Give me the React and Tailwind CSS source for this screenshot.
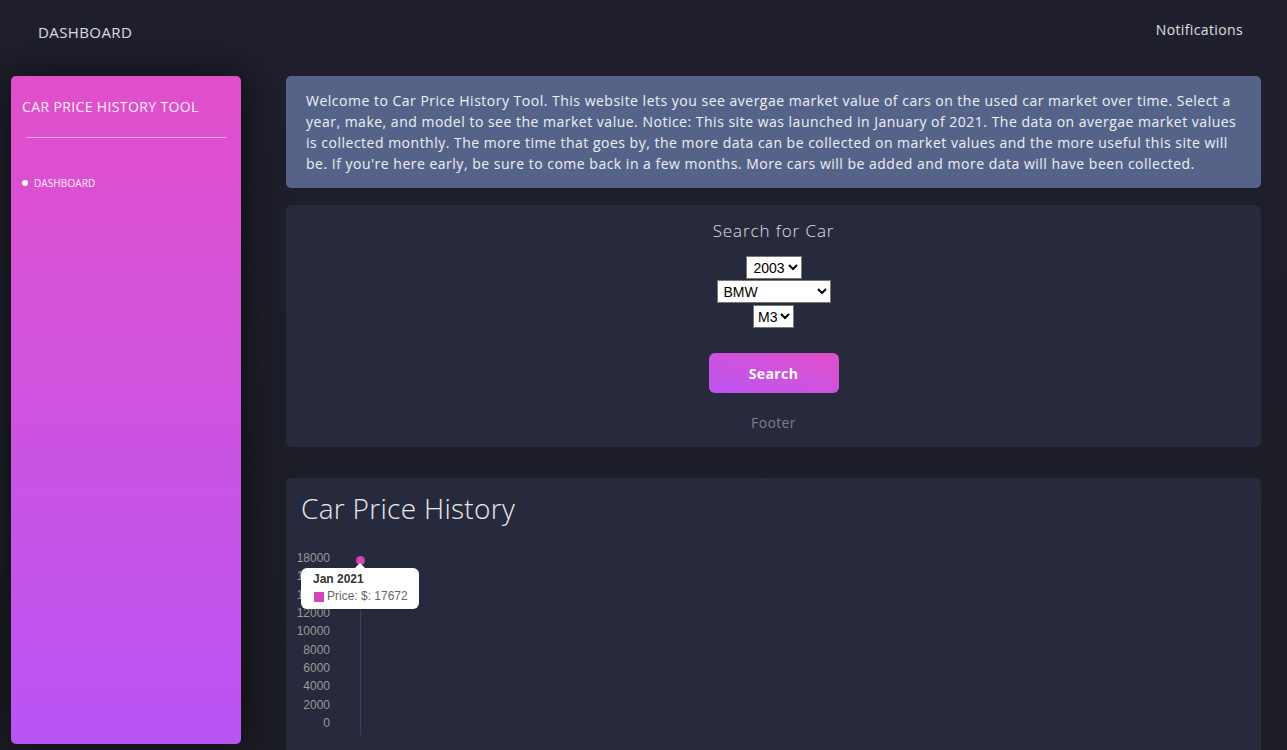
import React from "react";

export default function App() {
  const yLabels = ["18000", "16000", "14000", "12000", "10000", "8000", "6000", "4000", "2000", "0"];
  return (
    <div className="min-h-screen bg-gradient-to-b from-[#1f1f2e] to-[#1c1d24] font-['Open_Sans',sans-serif] text-white tracking-[0.37px]">
      <header className="h-[76px] flex justify-between items-start">
        <div className="pl-[38px] pt-[21px] text-[15px] leading-[22px] text-white/85 tracking-[0.4px]">DASHBOARD</div>
        <div className="pr-[44px] pt-[20px] text-[14px] leading-[20px] text-white/85">Notifications</div>
      </header>
      <div className="flex">
        <aside className="ml-[11px] w-[230px] h-[668px] shrink-0 rounded-[5px] bg-gradient-to-t from-[#ba54f5] to-[#e14eca] shadow-[0_0_45px_rgba(0,0,0,0.6)]">
          <div className="pl-[11px] pt-[21px] text-[14px] leading-[20px] text-white/90">CAR PRICE HISTORY TOOL</div>
          <div className="mx-[15px] mt-[20px] h-px bg-white/50"></div>
          <div className="mt-[38px] flex items-center pl-[11px] text-[10px] leading-[14px] text-white/90 tracking-[0.1px]">
            <span className="w-[6px] h-[6px] rounded-full bg-white mr-[6px]"></span>
            DASHBOARD
          </div>
        </aside>
        <main className="ml-[45px] mr-[26px] flex-1 min-w-0">
          <div className="rounded-[5px] bg-[#566389] px-5 py-[14px] text-[14px] leading-[21px] text-white/90 tracking-[0.5px]">
            Welcome to Car Price History Tool. This website lets you see avergae market value of cars on the used car market over time. Select a year, make, and model to see the market value. Notice: This site was launched in January of 2021. The data on avergae market values is collected monthly. The more time that goes by, the more data can be collected on market values and the more useful this site will be. If you're here early, be sure to come back in a few months. More cars will be added and more data will have been collected.
          </div>
          <div className="mt-[17px] rounded-[5px] bg-[#27293d] pt-[14px] pb-[14px] flex flex-col items-center">
            <div className="text-[17px] leading-[24px] font-light text-white/85 tracking-[0.9px]">Search for Car</div>
            <div className="mt-[13px] flex flex-col items-center gap-[1px] font-['Liberation_Sans',sans-serif] text-[14px] text-black tracking-normal">
              <select className="w-[56px] h-[23px] bg-white border border-[#767676] pl-[3px]" defaultValue="2003">
                <option>2003</option>
              </select>
              <select className="w-[114px] h-[23px] bg-white border border-[#767676] pl-[2px]" defaultValue="BMW">
                <option>BMW</option>
              </select>
              <select className="mt-[1px] w-[41px] h-[23px] bg-white border border-[#767676] pl-0" defaultValue="M3">
                <option>M3</option>
              </select>
            </div>
            <button className="mt-[25px] w-[130px] h-[40px] rounded-[6px] bg-gradient-to-bl from-[#e14eca] via-[#ba54f5] to-[#e14eca] bg-[length:210%_210%] bg-[position:top_right] text-[14px] font-bold text-white">
              Search
            </button>
            <div className="mt-[19px] text-[14px] leading-[21px] text-white/40">Footer</div>
          </div>
          <div className="mt-[31px] rounded-[5px] bg-[#27293d] px-[15px] pt-[11px] pb-[20px]">
            <div className="text-[28px] leading-[38px] font-light text-white/90 tracking-[0.3px]">Car Price History</div>
            <div className="relative mt-[21px] h-[200px] font-['Liberation_Sans',sans-serif] tracking-normal">
              <div className="absolute left-[-4px] top-[1px] w-[33px] flex flex-col items-end text-[12px] leading-[18.33px] text-[#9a9a9a]">
                {yLabels.map((l) => (
                  <div key={l}>{l}</div>
                ))}
              </div>
              <div className="absolute left-[59px] top-[17px] w-px h-[170px] bg-[#d048b6]/30"></div>
              <div className="absolute left-[55px] top-[8px] w-[9px] h-[9px] rounded-full bg-[#d048b6]"></div>
              <div className="absolute left-[0px] top-[20px] w-[118px] h-[41px] rounded-[6px] bg-white shadow-sm">
                <div className="absolute left-[54px] top-[-5px] w-0 h-0 border-l-[5px] border-r-[5px] border-b-[5px] border-l-transparent border-r-transparent border-b-white"></div>
                <div className="pl-[12px] pt-[4px] text-[12px] leading-[15px] font-bold text-[#333]">Jan 2021</div>
                <div className="pl-[13px] mt-[2px] flex items-center text-[12px] leading-[15px] text-[#666]">
                  <span className="w-[10px] h-[10px] bg-[#d048b6] mr-[3px]"></span>
                  Price: $: 17672
                </div>
              </div>
            </div>
          </div>
          <div className="h-[30px]"></div>
        </main>
      </div>
    </div>
  );
}
